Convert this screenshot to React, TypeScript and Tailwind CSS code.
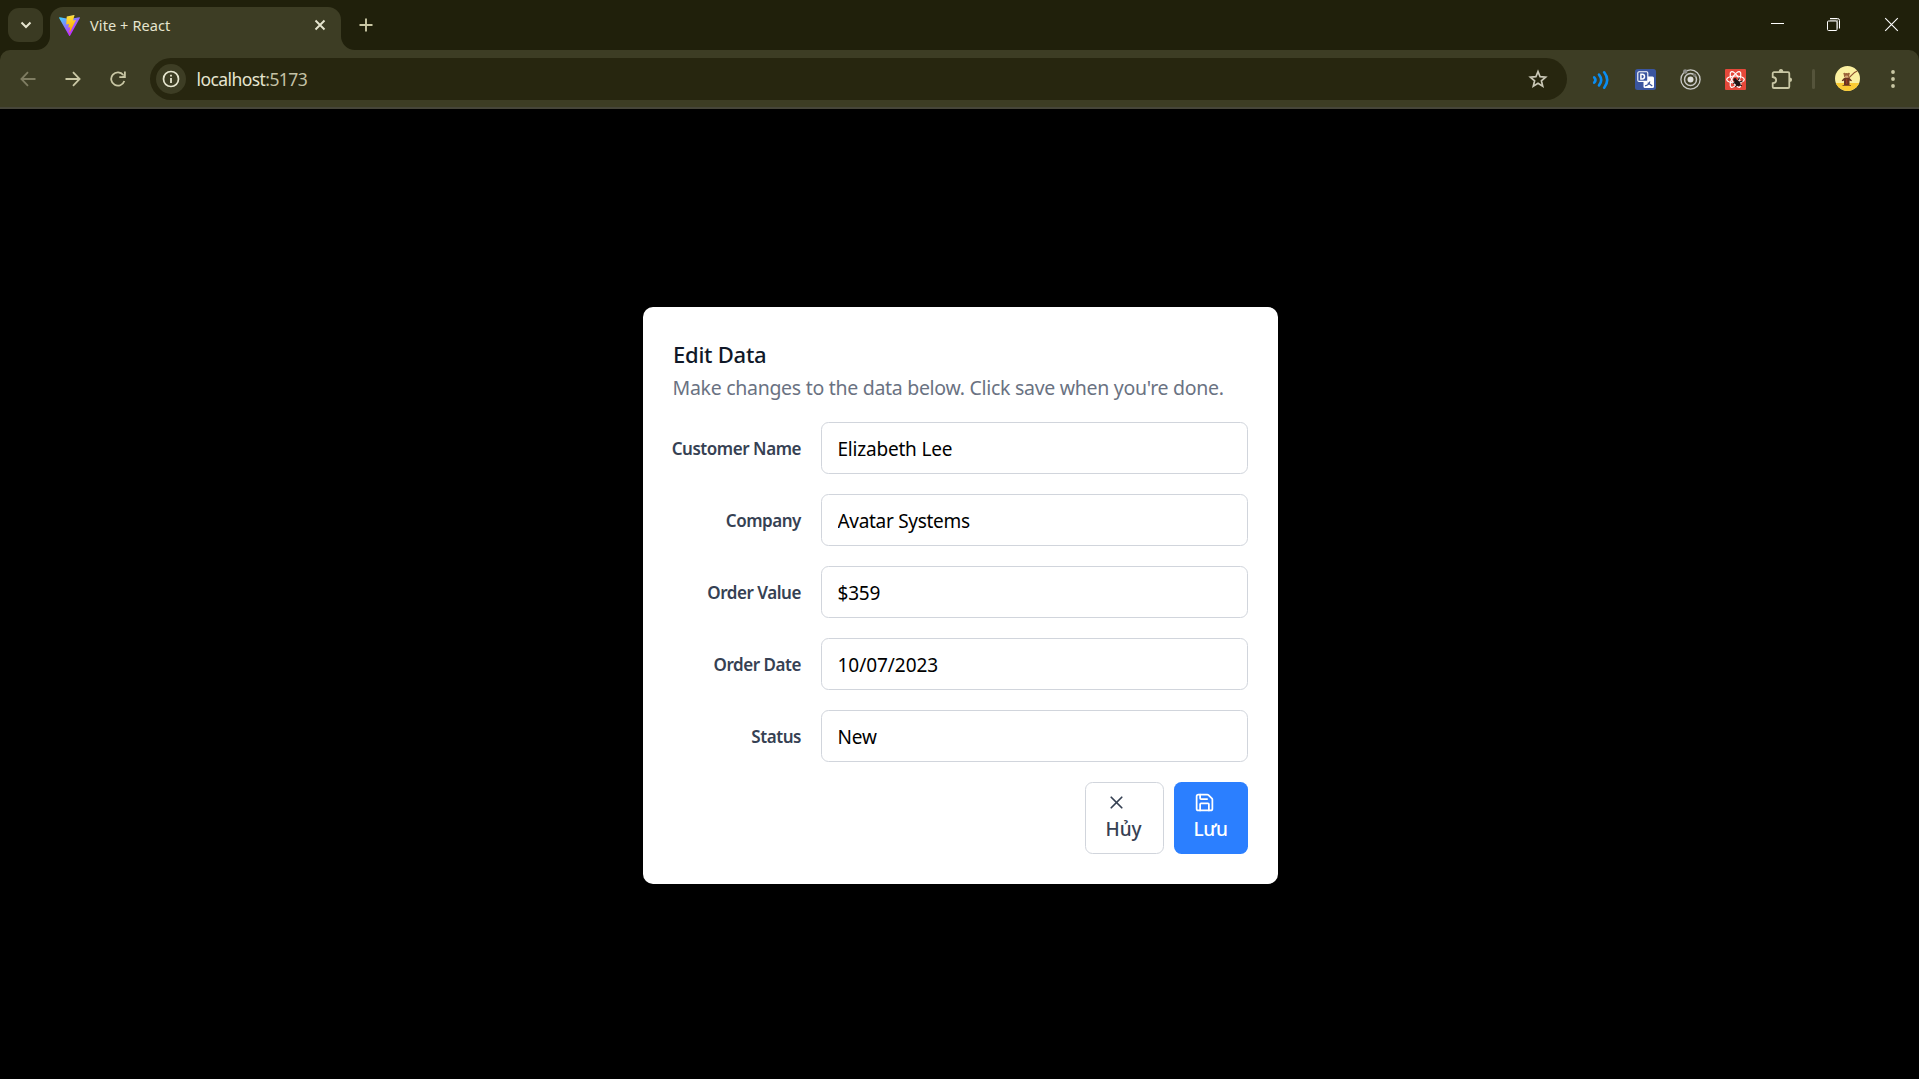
import React from "react";
import { Save, X } from "lucide-react";

type Field = { label: string; value: string; tracking: string };

const fields: Field[] = [
  { label: "Customer Name", value: "Elizabeth Lee", tracking: "tracking-[-0.2px]" },
  { label: "Company", value: "Avatar Systems", tracking: "tracking-[-0.3px]" },
  { label: "Order Value", value: "$359", tracking: "tracking-[-0.2px]" },
  { label: "Order Date", value: "10/07/2023", tracking: "tracking-[-0.05px]" },
  { label: "Status", value: "New", tracking: "tracking-[-0.2px]" },
];

function ViteLogo() {
  return (
    <svg className="h-[21px] w-[21px]" viewBox="0 0 256 257">
      <defs>
        <linearGradient id="vite-a" x1="-.8%" x2="57.6%" y1="7.7%" y2="78.4%">
          <stop offset="0%" stopColor="#41D1FF" />
          <stop offset="100%" stopColor="#BD34FE" />
        </linearGradient>
        <linearGradient id="vite-b" x1="43.4%" x2="50.3%" y1="2.2%" y2="89%">
          <stop offset="0%" stopColor="#FFEA83" />
          <stop offset="8.3%" stopColor="#FFDD35" />
          <stop offset="100%" stopColor="#FFA800" />
        </linearGradient>
      </defs>
      <path fill="url(#vite-a)" d="M255.153 37.938 134.897 252.976c-2.483 4.44-8.862 4.466-11.382.048L.875 37.958c-2.746-4.814 1.371-10.646 6.827-9.67l120.385 21.517a6.537 6.537 0 0 0 2.322-.004l117.867-21.483c5.438-.991 9.574 4.796 6.877 9.62Z" />
      <path fill="url(#vite-b)" d="M185.432.063 96.44 17.501a3.268 3.268 0 0 0-2.634 3.014l-5.474 92.456a3.268 3.268 0 0 0 3.997 3.378l24.777-5.718c2.318-.535 4.413 1.507 3.936 3.838l-7.361 36.047c-.495 2.426 1.782 4.5 4.151 3.78l15.304-4.649c2.372-.72 4.652 1.36 4.15 3.788l-11.698 56.621c-.732 3.542 3.979 5.473 5.943 2.437l1.313-2.028 72.516-144.72c1.215-2.423-.88-5.186-3.54-4.672l-25.505 4.922c-2.396.462-4.435-1.77-3.759-4.114l16.646-57.705c.677-2.35-1.37-4.583-3.769-4.113Z" />
    </svg>
  );
}

function TabStrip() {
  return (
    <div className="flex h-[50px] items-start bg-[#20200b]">
      <div className="mt-2 ml-2 flex h-[34px] w-[35px] items-center justify-center rounded-[11px] bg-[#3a3a22]">
        <svg className="h-[10px] w-[12px]" viewBox="0 0 12 10" fill="none" stroke="#e6e5cf" strokeWidth="2">
          <path d="M1.5 2.5 6 7l4.5-4.5" />
        </svg>
      </div>
      <div className="relative mt-[7px] ml-[7px] flex h-[43px] w-[291px] items-center rounded-t-[13px] bg-[#3d3d24] pb-[7px] pl-[9px]">
        <svg className="absolute bottom-0 -left-[14px] h-[14px] w-[14px]" viewBox="0 0 14 14">
          <path fill="#3d3d24" d="M14 0v14H0A14 14 0 0 0 14 0z" />
        </svg>
        <svg className="absolute -right-[14px] bottom-0 h-[14px] w-[14px]" viewBox="0 0 14 14">
          <path fill="#3d3d24" d="M0 0v14h14A14 14 0 0 1 0 0z" />
        </svg>
        <ViteLogo />
        <span className="ml-[10px] text-[14.5px] leading-5 tracking-[0.1px] text-[#e6e5cf]">Vite + React</span>
        <svg className="mr-[15px] ml-auto h-3 w-3" viewBox="0 0 12 12" stroke="#e6e5cf" strokeWidth="1.9">
          <path d="M1.5 1.5 10.5 10.5M10.5 1.5 1.5 10.5" />
        </svg>
      </div>
      <svg className="mt-[18px] ml-[17.5px] h-[14px] w-[14px]" viewBox="0 0 14 14" stroke="#c9c7a4" strokeWidth="1.9">
        <path d="M7 .5v13M.5 7h13" />
      </svg>
      <div className="mt-[17px] mr-[20px] ml-auto flex">
        <svg className="h-[15px] w-[15px]" viewBox="0 0 15 15" fill="none" stroke="#fff">
          <path d="M1 6.5h13" />
        </svg>
        <svg className="mr-[43px] ml-[41px] h-[15px] w-[15px]" viewBox="0 0 15 15" fill="none">
          <path d="M4 2.5h7.5v8.5" stroke="#8c8c80" strokeWidth="1.2" transform="translate(0 .6)" />
          <path d="M4 1.5h7.5a2 2 0 0 1 2 2v8" stroke="#fff" />
          <rect x="1.5" y="4" width="9.5" height="9.5" rx="1" stroke="#fff" />
        </svg>
        <svg className="h-[15px] w-[15px]" viewBox="0 0 15 15" fill="none" stroke="#fff" strokeWidth="1.1">
          <path d="M1.2 1.2l12.6 12.6M13.8 1.2 1.2 13.8" />
        </svg>
      </div>
    </div>
  );
}

function Arrow({ color, flip }: { color: string; flip?: boolean }) {
  return (
    <svg className={flip ? "h-4 w-4 rotate-180" : "h-4 w-4"} viewBox="0 0 16 16" fill="none" stroke={color} strokeWidth="1.8">
      <path d="M.5 8h13.5M8 1.2 14.6 8 8 14.8" />
    </svg>
  );
}

function ExtensionIcons() {
  return (
    <div className="ml-[24.5px] flex items-center">
      <svg className="mt-[2px] h-5 w-[18px]" viewBox="0 0 18 20" fill="none" stroke="#0a8df2" strokeWidth="2.6" strokeLinecap="round">
        <path d="M2.2 7.3Q4.7 10 2.2 12.7" />
        <path d="M7 4.6Q11.4 10 7 15.4" />
        <path d="M12.2 2.3Q18.2 10 12.2 17.7" />
      </svg>
      <svg className="mt-[2px] ml-[25.5px] h-[21px] w-[21px]" viewBox="0 0 21 21" fill="none">
        <rect width="21" height="21" rx="2.5" fill="#3a559f" />
        <rect x="8.5" y="7.500" width="10.500" height="11.500" rx="1.5" fill="#fff" />
        <rect x="2.8" y="2.8" width="10" height="9.6" rx="1.2" fill="#3a559f" stroke="#fff" strokeWidth="1.1" />
        <path d="M5.9 5.200h1.4a2.2 2.4 0 0 1 0 4.800H5.900z" stroke="#fff" strokeWidth="1.5" />
        <path d="M10 16.800c3.200-.6 4.400-2.200 4.800-4.300M12.700 13.700l4.600 3.300" stroke="#3a559f" strokeWidth="1.3" />
      </svg>
      <svg className="mt-[2px] ml-[24px] h-[21px] w-[21px]" viewBox="0 0 21 21" fill="none">
        <circle cx="10.5" cy="10.5" r="9.6" stroke="#c9c9c6" strokeWidth="1.3" />
        <circle cx="10.5" cy="10.5" r="6" stroke="#c9c9c6" strokeWidth="1.5" />
        <circle cx="10.5" cy="10.5" r="3" fill="#dededb" />
        <circle cx="5.2" cy="2.5" r="2.2" fill="#8f8f8a" />
        <circle cx="14.6" cy="6.2" r="1.7" fill="#7d7d76" />
      </svg>
      <svg className="mt-[2px] ml-[24px] h-[21px] w-[21px]" viewBox="0 0 21 21" fill="none">
        <rect width="21" height="21" rx="1" fill="#e5483a" />
        <g stroke="#fff" strokeWidth="1.2">
          <ellipse cx="10.5" cy="10.5" rx="8.8" ry="3.5" />
          <ellipse cx="10.5" cy="10.5" rx="8.8" ry="3.5" transform="rotate(60 10.5 10.5)" />
          <ellipse cx="10.5" cy="10.5" rx="8.8" ry="3.5" transform="rotate(120 10.5 10.5)" />
        </g>
        <ellipse cx="12.5" cy="14" rx="3.500" ry="2.400" transform="rotate(48 12.5 14)" fill="#1f1514" />
        <circle cx="10" cy="10.8" r="1.7" fill="#1f1514" />
        <path d="M8 14.5l3-1.3M10.5 18l1.5-2.5M13.5 11l.8-2.5M14.5 13l3-1M15 16l2 .8" stroke="#1f1514" strokeWidth="1.2" />
      </svg>
      <svg className="ml-[24px] h-6 w-6" viewBox="0 0 24 24" fill="none">
        <path d="M4 5.2h14a1.3 1.3 0 0 1 1.3 1.3v13.2a1.3 1.3 0 0 1-1.3 1.3H4A1.3 1.3 0 0 1 2.7 19.7V16.2C7.3 15.6 7.3 10.7 2.7 10V6.5A1.3 1.3 0 0 1 4 5.2z" stroke="#c9c7a4" strokeWidth="1.8" />
        <path d="M8.7 5a2.3 2.9 0 0 1 4.6 0zM19.5 10.5a2.6 2.3 0 0 1 0 4.6z" fill="#c9c7a4" />
      </svg>
      <div className="ml-[17.5px] h-5 w-[3px] rounded-full bg-[#55543b]" />
      <svg className="ml-[20.5px] h-[25px] w-[25px]" viewBox="0 0 25 25" fill="none">
        <clipPath id="avatar-clip">
          <circle cx="12.5" cy="12.5" r="12.5" />
        </clipPath>
        <g clipPath="url(#avatar-clip)">
          <path fill="#fbf0a0" d="M0 0h25v25H0z" />
          <path fill="#fbcb33" d="M0 17h25v8H0z" />
          <path d="M13 12.5C16.5 10 18 6.5 22.3 5" stroke="#8f5330" strokeWidth="1.1" />
          <path fill="#6b3520" d="M9 12h5.500l2.500 2.500-.8.8-1.700-.8V19h1.500v.8H7.500V19H9v-4.500l-1.500.8-.8-.8z" />
          <circle cx="9.4" cy="7.8" r="1.1" fill="#9b6238" />
          <circle cx="13.8" cy="7.8" r="1.1" fill="#9b6238" />
          <ellipse cx="11.6" cy="9.6" rx="2.700" ry="2.500" fill="#9b6238" />
          <ellipse cx="11.6" cy="10.6" rx="1.700" ry="1.1" fill="#d5a577" />
          <path d="M11.7 13v5" stroke="#a33d24" strokeWidth="1" />
        </g>
      </svg>
      <svg className="ml-[30.5px] h-5 w-1" viewBox="0 0 4 20" fill="#c9c7a4">
        <circle cx="2" cy="3" r="1.9" />
        <circle cx="2" cy="10" r="1.9" />
        <circle cx="2" cy="17" r="1.9" />
      </svg>
    </div>
  );
}

function Toolbar() {
  return (
    <div className="bg-[#20200b]">
      <div className="flex h-[59px] items-center rounded-t-[10px] border-b-2 border-[#47463a] bg-[#3d3d24] pl-[19.5px]">
        <Arrow color="#7f7d62" flip />
        <div className="ml-[29px]">
          <Arrow color="#c9c7a4" />
        </div>
        <svg className="ml-[29px] h-4 w-4" viewBox="0 0 16 16" fill="none" stroke="#c9c7a4" strokeWidth="1.8">
          <path d="M14.3 10A6.7 6.7 0 1 1 13.3 4" />
          <path d="M14.9 .5V6.2H9.3" />
          <path d="M14.9 3v3.2h-3.2z" fill="#c9c7a4" stroke="none" />
        </svg>
        <div className="ml-[24.5px] flex h-[42px] w-[1417px] items-center rounded-full bg-[#27260f] pr-[19.5px] pl-[6px]">
          <div className="flex h-[30px] w-[30px] items-center justify-center rounded-full bg-[#3d3d24]">
            <svg className="h-[18px] w-[18px]" viewBox="0 0 18 18" fill="none" stroke="#e6e5cf">
              <circle cx="9" cy="9" r="7.5" strokeWidth="1.7" />
              <path d="M9 8v5M9 4.8v1.8" strokeWidth="1.8" />
            </svg>
          </div>
          <span className="mt-px ml-[10.5px] text-[17.5px] leading-6 tracking-[-0.57px] text-[#e6e5cf]">
            localhost<span className="text-[#c3c1a5]">:5173</span>
          </span>
          <svg className="mt-px ml-auto h-5 w-5" viewBox="0 0 20 20" fill="none" stroke="#c9c7b6" strokeWidth="1.7">
            <path d="M10 2.6l2.1 5.1 5.5.45-4.2 3.6 1.3 5.4L10 14.25l-4.7 2.9 1.3-5.4L2.4 8.15l5.5-.45z" />
          </svg>
        </div>
        <ExtensionIcons />
      </div>
    </div>
  );
}

function EditDialog() {
  return (
    <div className="mt-[198px] h-[577px] w-[635px] rounded-[10px] bg-white p-[30px]">
      <h2 className="mt-[2px] text-[22px] leading-[30px] font-medium tracking-[-0.25px] text-[#101828]">Edit Data</h2>
      <p className="mt-[4px] -ml-[0.5px] text-[19.5px] leading-[30px] tracking-[-0.29px] whitespace-nowrap text-[#6a7282]">
        Make changes to the data below. Click save when you're done.
      </p>
      <div className="mt-[19px] flex flex-col gap-5">
        {fields.map((f) => (
          <label key={f.label} className="flex items-center">
            <span className="flex w-[128px] justify-end text-[17px] leading-[25px] font-semibold tracking-[-0.45px] whitespace-nowrap text-[#364153]">
              {f.label}
            </span>
            <input
              type="text"
              defaultValue={f.value}
              className={`ml-5 h-[52px] w-[427px] rounded-[7.5px] border border-[#d1d5dc] px-[15.5px] pt-[2px] text-[19px] text-black outline-none ${f.tracking}`}
            />
          </label>
        ))}
      </div>
      <div className="mt-5 flex justify-end gap-[10px]">
        <button className="flex h-[72px] w-[79px] flex-col items-start rounded-[7.5px] border border-[#d1d5dc] pt-[9px] pl-[19.5px] text-[19px] font-medium text-[#364153]">
          <X className="h-[21px] w-[21px]" />
          <span className="mt-px leading-[30px] tracking-[-0.05px]">Hủy</span>
        </button>
        <button className="flex h-[72px] w-[74px] flex-col items-start rounded-[7.5px] bg-[#2b7fff] pt-[10px] pl-[19.5px] text-[19px] font-medium text-white">
          <Save className="h-[21px] w-[21px]" />
          <span className="mt-px leading-[30px] tracking-[-0.4px]">Lưu</span>
        </button>
      </div>
    </div>
  );
}

export default function App() {
  return (
    <div className="flex h-[1079px] w-[1919px] flex-col overflow-hidden bg-black font-['Noto_Sans',sans-serif]">
      <TabStrip />
      <Toolbar />
      <main className="flex flex-1 justify-center pl-[2px]">
        <EditDialog />
      </main>
    </div>
  );
}
